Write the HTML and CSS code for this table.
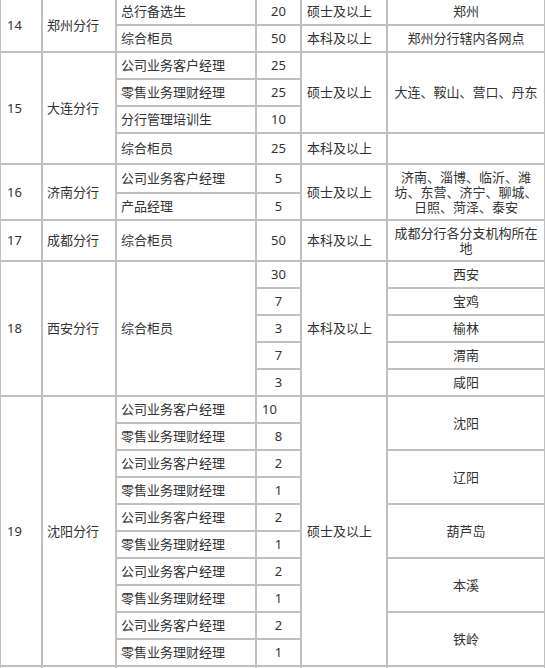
FILE: index.html
```html
<!DOCTYPE html>
<html lang="zh-CN">
<head>
<meta charset="utf-8">
<title>招聘岗位</title>
<link rel="stylesheet" href="styles.css">
</head>
<body>
<table class="jobs">
  <tbody>
    <tr>
      <td class="c1" rowspan="2">14</td>
      <td class="c2" rowspan="2">郑州分行</td>
      <td class="c3">总行备选生</td>
      <td class="c4">20</td>
      <td class="c5">硕士及以上</td>
      <td class="c6">郑州</td>
    </tr>
    <tr>
      <td class="c3">综合柜员</td>
      <td class="c4">50</td>
      <td class="c5">本科及以上</td>
      <td class="c6">郑州分行辖内各网点</td>
    </tr>

    <tr>
      <td class="c1" rowspan="4">15</td>
      <td class="c2" rowspan="4">大连分行</td>
      <td class="c3">公司业务客户经理</td>
      <td class="c4">25</td>
      <td class="c5" rowspan="3">硕士及以上</td>
      <td class="c6" rowspan="3">大连、鞍山、营口、丹东</td>
    </tr>
    <tr>
      <td class="c3">零售业务理财经理</td>
      <td class="c4">25</td>
    </tr>
    <tr>
      <td class="c3">分行管理培训生</td>
      <td class="c4">10</td>
    </tr>
    <tr class="h31">
      <td class="c3">综合柜员</td>
      <td class="c4">25</td>
      <td class="c5">本科及以上</td>
      <td class="c6"></td>
    </tr>

    <tr class="h29">
      <td class="c1" rowspan="2">16</td>
      <td class="c2" rowspan="2">济南分行</td>
      <td class="c3">公司业务客户经理</td>
      <td class="c4">5</td>
      <td class="c5" rowspan="2">硕士及以上</td>
      <td class="c6" rowspan="2">济南、淄博、临沂、潍坊、东营、济宁、聊城、日照、菏泽、泰安</td>
    </tr>
    <tr>
      <td class="c3">产品经理</td>
      <td class="c4">5</td>
    </tr>

    <tr class="h41">
      <td class="c1">17</td>
      <td class="c2">成都分行</td>
      <td class="c3">综合柜员</td>
      <td class="c4">50</td>
      <td class="c5">本科及以上</td>
      <td class="c6">成都分行各分支机构所在地</td>
    </tr>

    <tr>
      <td class="c1" rowspan="5">18</td>
      <td class="c2" rowspan="5">西安分行</td>
      <td class="c3" rowspan="5">综合柜员</td>
      <td class="c4">30</td>
      <td class="c5" rowspan="5">本科及以上</td>
      <td class="c6">西安</td>
    </tr>
    <tr><td class="c4">7</td><td class="c6">宝鸡</td></tr>
    <tr><td class="c4">3</td><td class="c6">榆林</td></tr>
    <tr><td class="c4">7</td><td class="c6">渭南</td></tr>
    <tr><td class="c4">3</td><td class="c6">咸阳</td></tr>

    <tr>
      <td class="c1" rowspan="10">19</td>
      <td class="c2" rowspan="10">沈阳分行</td>
      <td class="c3">公司业务客户经理</td>
      <td class="c4 left">10</td>
      <td class="c5" rowspan="10">硕士及以上</td>
      <td class="c6" rowspan="2">沈阳</td>
    </tr>
    <tr><td class="c3">零售业务理财经理</td><td class="c4">8</td></tr>
    <tr>
      <td class="c3">公司业务客户经理</td>
      <td class="c4">2</td>
      <td class="c6" rowspan="2">辽阳</td>
    </tr>
    <tr><td class="c3">零售业务理财经理</td><td class="c4">1</td></tr>
    <tr>
      <td class="c3">公司业务客户经理</td>
      <td class="c4">2</td>
      <td class="c6" rowspan="2">葫芦岛</td>
    </tr>
    <tr><td class="c3">零售业务理财经理</td><td class="c4">1</td></tr>
    <tr>
      <td class="c3">公司业务客户经理</td>
      <td class="c4">2</td>
      <td class="c6" rowspan="2">本溪</td>
    </tr>
    <tr><td class="c3">零售业务理财经理</td><td class="c4">1</td></tr>
    <tr>
      <td class="c3">公司业务客户经理</td>
      <td class="c4">2</td>
      <td class="c6" rowspan="2">铁岭</td>
    </tr>
    <tr><td class="c3">零售业务理财经理</td><td class="c4">1</td></tr>

    <tr>
      <td class="c1"></td>
      <td class="c2"></td>
      <td class="c3"></td>
      <td class="c4"></td>
      <td class="c5"></td>
      <td class="c6"></td>
    </tr>
  </tbody>
</table>
</body>
</html>
```

FILE: styles.css
```css
html, body {
  margin: 0;
  padding: 0;
  background: #ffffff;
}

body {
  font-family: "Noto Sans", "Noto Sans CJK SC", sans-serif;
  font-size: 13px;
  color: #333333;
}

.jobs {
  width: 545px;
  margin-top: -2px;
  table-layout: fixed;
  border-collapse: separate;
  border-spacing: 0;
}

.jobs tr {
  height: 27px;
}

.jobs tr.h29 { height: 29px; }
.jobs tr.h31 { height: 31px; }
.jobs tr.h41 { height: 41px; }

.jobs td {
  box-sizing: border-box;
  border: 1px solid #c0c0c0;
  padding: 0;
  line-height: 15px;
  vertical-align: middle;
  text-align: left;
  white-space: normal;
}

.jobs .c1 { width: 42px; padding-left: 6px; }
.jobs .c2 { width: 74px; padding-left: 4px; }
.jobs .c3 { width: 140px; padding-left: 4px; }
.jobs .c4 { width: 45px; text-align: center; }
.jobs .c4.left { text-align: left; padding-left: 5px; }
.jobs .c5 { width: 86px; padding-left: 5px; }
.jobs .c6 { width: 158px; padding: 0 4px; text-align: center; }
```
